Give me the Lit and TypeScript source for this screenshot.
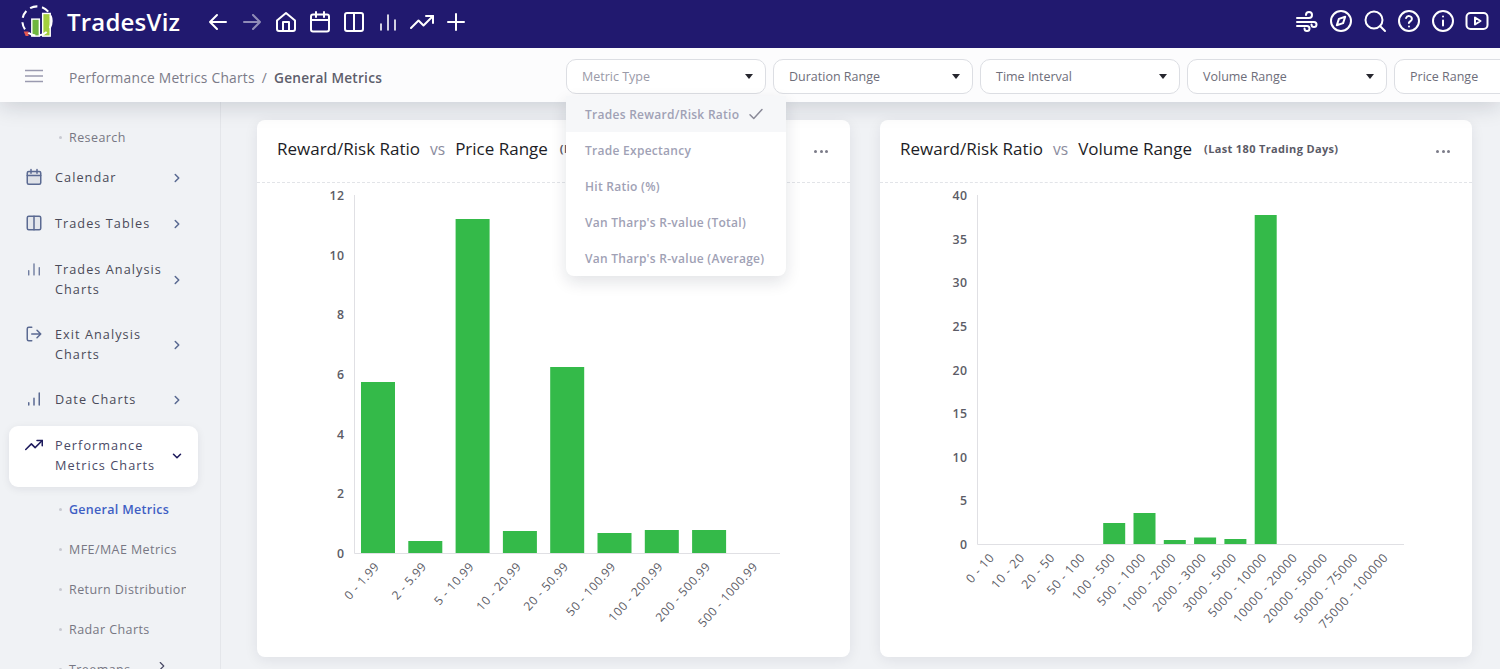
import { LitElement, html, css, svg } from "lit";
import { customElement } from "lit/decorators.js";

const ic = (body: unknown, size = 24, cls = "") => html`<svg class="ic ${cls}" width=${size} height=${size} viewBox="0 0 24 24" fill="none" stroke="currentColor" stroke-width="2" stroke-linecap="round" stroke-linejoin="round">${body}</svg>`;

const I = {
  left: svg`<path d="M20 12H4M11 5l-7 7 7 7"/>`,
  right: svg`<path d="M4 12h16M13 5l7 7-7 7"/>`,
  home: svg`<path d="M3 10.5 12 3l9 7.5V19a2 2 0 0 1-2 2H5a2 2 0 0 1-2-2z"/><path d="M9 21v-9h6v9"/>`,
  cal: svg`<rect x="3" y="4.5" width="18" height="17" rx="2"/><path d="M3 10h18M8 2v5M16 2v5"/>`,
  cols: svg`<rect x="3" y="3" width="18" height="18" rx="2"/><path d="M12 3v18"/>`,
  bars: svg`<path d="M5 20v-6M12 20V5M19 20V10" stroke-width="1.6"/>`,
  dateBars: svg`<path d="M5 20v-3M12 20v-9M19 20V4"/>`,
  trend: svg`<path d="M1 18l7.5-7.5 5 5L23 6"/><path d="M16 6h7v7"/>`,
  plus: svg`<path d="M12 4v16M4 12h16"/>`,
  wind: svg`<path d="M2 9h12a3 3 0 1 0-3-3"/><path d="M2 13h17a2.5 2.5 0 1 1-2.5 2.5"/><path d="M2 17h10a2.5 2.5 0 1 1-2.5 2.5"/>`,
  compass: svg`<circle cx="12" cy="12" r="10"/><path d="M16.2 7.8l-2.1 6.3-6.3 2.1 2.1-6.3z"/>`,
  search: svg`<circle cx="11" cy="11" r="8.5"/><path d="M22 22l-5-5"/>`,
  help: svg`<circle cx="12" cy="12" r="10"/><path d="M9.1 9a3 3 0 0 1 5.8 1c0 2-3 2.6-3 4"/><path d="M12 17.5h.01"/>`,
  info: svg`<circle cx="12" cy="12" r="10"/><path d="M12 16.5v-5M12 7.5h.01"/>`,
  video: svg`<rect x="1.5" y="4" width="21" height="16" rx="4"/><path d="M10 8.5l5.5 3.5-5.5 3.5z"/>`,
  exit: svg`<path d="M9 3H5a2 2 0 0 0-2 2v14a2 2 0 0 0 2 2h4"/><path d="M9 12h12M16 7l5 5-5 5"/>`,
  chevR: svg`<path d="M9 6l6 6-6 6"/>`,
  chevD: svg`<path d="M6 9l6 6 6-6"/>`,
  calFill: svg`<rect x="3" y="4.5" width="18" height="17" rx="2" fill="#dfe2e8"/><path d="M3 10h18M8 2v5M16 2v5"/>`,
  colsFill: svg`<rect x="3" y="3" width="18" height="18" rx="2" fill="#e4e7ec"/><path d="M12 3v18"/>`,
};

interface ChartCfg { x: number; w: number; axisX: number; axisEnd: number; base: number; top: number; ticks: number[]; barW: number; step: number; first: number; bars: (number | null)[]; labels: string[]; rot: number; cls: string; }

const chart1: ChartCfg = { x: 257, w: 593, axisX: 354.5, axisEnd: 780, base: 553, top: 195, ticks: [0, 2, 4, 6, 8, 10, 12], barW: 34, step: 47.3, first: 361, bars: [382, 541, 219, 531, 367, 533, 530, 530, null], labels: ["0 - 1.99", "2 - 5.99", "5 - 10.99", "10 - 20.99", "20 - 50.99", "50 - 100.99", "100 - 200.99", "200 - 500.99", "500 - 1000.99"], rot: -48, cls: "a" };
const chart2: ChartCfg = { x: 880, w: 592, axisX: 977.5, axisEnd: 1404, base: 544, top: 195, ticks: [0, 5, 10, 15, 20, 25, 30, 35, 40], barW: 22, step: 30.3, first: 982, bars: [null, null, null, null, 523, 513, 540, 537.5, 539, 215, null, null, null, null], labels: ["0 - 10", "10 - 20", "20 - 50", "50 - 100", "100 - 500", "500 - 1000", "1000 - 2000", "2000 - 3000", "3000 - 5000", "5000 - 10000", "10000 - 20000", "20000 - 50000", "50000 - 75000", "75000 - 100000"], rot: -48, cls: "b" };

@customElement("app-root")
export class AppRoot extends LitElement {
  static styles = css`
    :host { display: flex; flex-direction: column; width: 1500px; height: 669px; overflow: hidden; position: relative; background: #f0f2f5; font-family: "Open Sans", "Noto Sans", sans-serif; color: #4a4a58; }
    .ic { display: block; flex: none; }
    .top { height: 48px; flex: none; background: #21196f; display: flex; align-items: center; color: #fff; padding: 0 11px 0 20px; position: relative; z-index: 3; }
    .logo { display: flex; align-items: center; width: 186px; }
    .logo svg { margin-top: -6px; }
    .brand { font-size: 24px; font-weight: 600; margin-left: 13px; letter-spacing: 0.2px; line-height: 28px; margin-top: -4px; }
    .nav { display: flex; gap: 10px; margin-top: -5px; }
    .nav .muted { opacity: .5; }
    .right { margin-left: auto; display: flex; gap: 10px; margin-top: -6px; }
    .sub { height: 54px; flex: none; background: #fcfcfd; display: flex; align-items: center; box-shadow: 0 4px 22px rgba(20,25,50,.17); position: relative; z-index: 2; overflow: hidden; }
    .burger { width: 69px; padding: 2px 0 0 25px; box-sizing: border-box; color: #9a9ab0; flex: none; }
    .crumbs { width: 497px; flex: none; font-size: 13.8px; color: #7b7b88; white-space: nowrap; display: flex; gap: 7px; letter-spacing: .22px; padding-top: 4px; }
    .crumbs b { font-weight: 600; color: #5e5e6c; font-size: 13.7px; }
    .selects { display: flex; gap: 7px; margin-top: 2px; }
    .sel { width: 200px; height: 35px; box-sizing: border-box; flex: none; border: 1px solid #dcdee3; border-radius: 10px; background: #fff; display: flex; align-items: center; justify-content: space-between; padding: 0 12px 0 15px; font-size: 12.5px; color: #6e6e7a; }
    .sel.ph { color: #9a9aa8; }
    .caret { width: 0; height: 0; border-left: 4.5px solid transparent; border-right: 4.5px solid transparent; border-top: 5px solid #26262e; }
    .body { flex: 1; display: flex; min-height: 0; }
    .side { width: 221px; box-sizing: border-box; flex: none; display: flex; flex-direction: column; border-right: 1px solid #e4e6ea; padding: 17px 0 0 9px; overflow: hidden; font-size: 12.7px; letter-spacing: 1.05px; }
    .sublink { height: 40px; flex: none; display: flex; align-items: center; padding-left: 50px; color: #777783; width: 127px; white-space: nowrap; overflow: hidden; letter-spacing: .42px; box-sizing: content-box; font-size: 12.5px; }
    .sublink.first { height: 36px; }
    .sublink::before { content: ""; width: 3px; height: 3px; border-radius: 50%; background: #c8cad2; margin-right: 7px; flex: none; }
    .sublink.cur { color: #3f5fc4; font-weight: 600; letter-spacing: .3px; }
    .sublink.tree { overflow: visible; }
    .sublink.tree svg { margin-left: 24px; margin-top: -6px; color: #4a4a66; }
    .row { width: 189px; flex: none; box-sizing: border-box; margin: 3px 0; padding: 10px 8px 10px 16px; display: flex; align-items: center; line-height: 20px; color: #4a4a58; }
    .row .t { width: 110px; margin: -1px 0 1px 12px; flex: none; }
    .row .chev { margin-left: 5px; color: #5a6a92; }
    .row .chev svg { stroke-width: 2.6; }
    .row .lead { color: #5b6a92; margin-top: -2px; }
    .row.two { margin-bottom: 2px; }
    .row.two .lead { align-self: flex-start; margin-top: 0; }
    .row.on { background: #fff; border-radius: 9px; box-shadow: 0 2px 8px rgba(20,25,50,.08); color: #4a4a66; padding-bottom: 11px; }
    .row.on .lead, .row.on .chev { color: #1d1a5c; }
    .main { flex: 1; display: flex; gap: 30px; padding: 18px 0 0 36px; min-width: 0; }
    .card { height: 537px; background: #fff; border-radius: 8px; box-shadow: 0 3px 14px rgba(20,25,50,.08); flex: none; }
    .head { height: 63px; box-sizing: border-box; border-bottom: 1px dashed #e2e4e8; display: flex; align-items: center; padding: 0 20px 5px; white-space: nowrap; color: #1d1d26; font-size: 17px; }
    .vs { color: #8b8b9d; margin: 0 10px; font-size: 15.5px; }
    .range { margin-left: 12px; font-size: 11px; font-weight: 700; color: #5a5a66; letter-spacing: .35px; }
    .dots { margin-left: auto; display: flex; gap: 2.5px; padding: 5px 2px 0 0; }
    .dots i { width: 3px; height: 3px; border-radius: 50%; background: #7b7b88; }
    .plot { display: block; }
    .plot text { font-family: "Open Sans", sans-serif; fill: #5c5c66; }
    .plot .ytick { font-weight: 600; text-anchor: end; letter-spacing: .5px; font-size: 12.3px; }
    .plot .xtick { text-anchor: end; letter-spacing: .55px; }
    .plot .xtick.a { font-size: 12px; }
    .plot .xtick.b { font-size: 12.3px; letter-spacing: .6px; }
    .menu { position: absolute; left: 566px; top: 96px; width: 220px; height: 180px; background: #fff; border-radius: 0 0 8px 8px; box-shadow: 0 6px 16px rgba(20,25,50,.12); z-index: 4; font-size: 12px; color: #a0a1b5; font-weight: 600; letter-spacing: .27px; }
    .mi { height: 36px; display: flex; align-items: center; padding-left: 19px; white-space: nowrap; }
    .mi.sel0 { background: #f6f7f9; }
    .mi.sel0 svg { margin-left: 8px; color: #8a8a98; }
  `;

  private chart(c: ChartCfg) {
    const scale = (c.base - c.top) / (c.ticks.length - 1);
    return html`<svg class="plot" width=${c.w} height="474" viewBox="${c.x} 183 ${c.w} 474">
      <path d="M${c.axisX} ${c.top}V${c.base + .5}H${c.axisEnd}" fill="none" stroke="#e0e0e4"/>
      ${c.ticks.map((t, i) => svg`<text class="ytick" x=${c.axisX - 10} y=${c.base - i * scale + 5}>${t}</text>`)}
      ${c.bars.map((top, i) => top === null ? "" : svg`<rect x=${c.first + i * c.step} y=${top} width=${c.barW} height=${c.base - top} fill="#34ba49"/>`)}
      ${c.labels.map((l, i) => {
        const cx = c.first + i * c.step + c.barW / 2 + 2;
        const cy = c.base + 14;
        return svg`<text class="xtick ${c.cls}" transform="translate(${cx} ${cy}) rotate(${c.rot})">${l}</text>`;
      })}
    </svg>`;
  }

  private row(icon: unknown, label: unknown, two = false, on = false) {
    return html`<div class="row ${two ? "two" : ""} ${on ? "on" : ""}">
      <span class="lead">${ic(icon, 18)}</span><span class="t">${label}</span>
      <span class="chev">${ic(on ? I.chevD : I.chevR, 14)}</span>
    </div>`;
  }

  render() {
    return html`
      <div class="top">
        <div class="logo">
          <svg width="34" height="34" viewBox="0 0 36 36" fill="none">
            <path d="M4 29h5v5H6z" fill="#e8574f"/>
            <rect x="12.5" y="16" width="8" height="18" fill="#6fb63f" stroke="#fff" stroke-width="1.5"/>
            <rect x="24" y="10" width="8" height="24" fill="#a4cf3d" stroke="#fff" stroke-width="1.5"/>
            <circle cx="18" cy="18" r="15.5" stroke="#fff" stroke-width="2.2" stroke-dasharray="8 5"/>
          </svg>
          <span class="brand">TradesViz</span>
        </div>
        <div class="nav">
          ${ic(I.left)}<span class="muted">${ic(I.right)}</span>${[I.home, I.cal, I.cols, I.bars, I.trend, I.plus].map((x) => ic(x))}
        </div>
        <div class="right">
          ${[I.wind, I.compass, I.search, I.help, I.info, I.video].map((x) => ic(x))}
        </div>
      </div>
      <div class="sub">
        <div class="burger"><svg class="ic" width="18" height="14" viewBox="0 0 18 14" stroke="currentColor" stroke-width="1.6"><path d="M0 1.5h18M0 7h18M0 12.5h18"/></svg></div>
        <div class="crumbs"><span>Performance Metrics Charts</span><span>/</span><b>General Metrics</b></div>
        <div class="selects">
          <div class="sel ph">Metric Type<i class="caret"></i></div>
          <div class="sel">Duration Range<i class="caret"></i></div>
          <div class="sel">Time Interval<i class="caret"></i></div>
          <div class="sel">Volume Range<i class="caret"></i></div>
          <div class="sel">Price Range<i class="caret"></i></div>
        </div>
      </div>
      <div class="body">
        <div class="side">
          <div class="sublink first">Research</div>
          ${this.row(I.calFill, "Calendar")}
          ${this.row(I.colsFill, "Trades Tables")}
          ${this.row(I.bars, html`Trades Analysis Charts`, true)}
          ${this.row(I.exit, html`Exit Analysis Charts`, true)}
          ${this.row(I.dateBars, "Date Charts")}
          ${this.row(I.trend, html`Performance Metrics Charts`, true, true)}
          <div class="sublink cur">General Metrics</div>
          <div class="sublink">MFE/MAE Metrics</div>
          <div class="sublink">Return Distribution</div>
          <div class="sublink">Radar Charts</div>
          <div class="sublink tree">Treemaps ${ic(I.chevR, 14)}</div>
        </div>
        <div class="main">
          <div class="card" style="width:${chart1.w}px">
            <div class="head"><span>Reward/Risk Ratio</span><span class="vs">vs</span><span>Price Range</span><span class="range">(Last 180 Trading Days)</span><span class="dots"><i></i><i></i><i></i></span></div>
            ${this.chart(chart1)}
          </div>
          <div class="card" style="width:${chart2.w}px">
            <div class="head"><span>Reward/Risk Ratio</span><span class="vs">vs</span><span>Volume Range</span><span class="range">(Last 180 Trading Days)</span><span class="dots"><i></i><i></i><i></i></span></div>
            ${this.chart(chart2)}
          </div>
        </div>
      </div>
      <div class="menu">
        <div class="mi sel0">Trades Reward/Risk Ratio ${ic(svg`<path d="M4 13l5 5L20 6"/>`, 18)}</div>
        <div class="mi">Trade Expectancy</div>
        <div class="mi">Hit Ratio (%)</div>
        <div class="mi">Van Tharp's R-value (Total)</div>
        <div class="mi">Van Tharp's R-value (Average)</div>
      </div>
    `;
  }
}
